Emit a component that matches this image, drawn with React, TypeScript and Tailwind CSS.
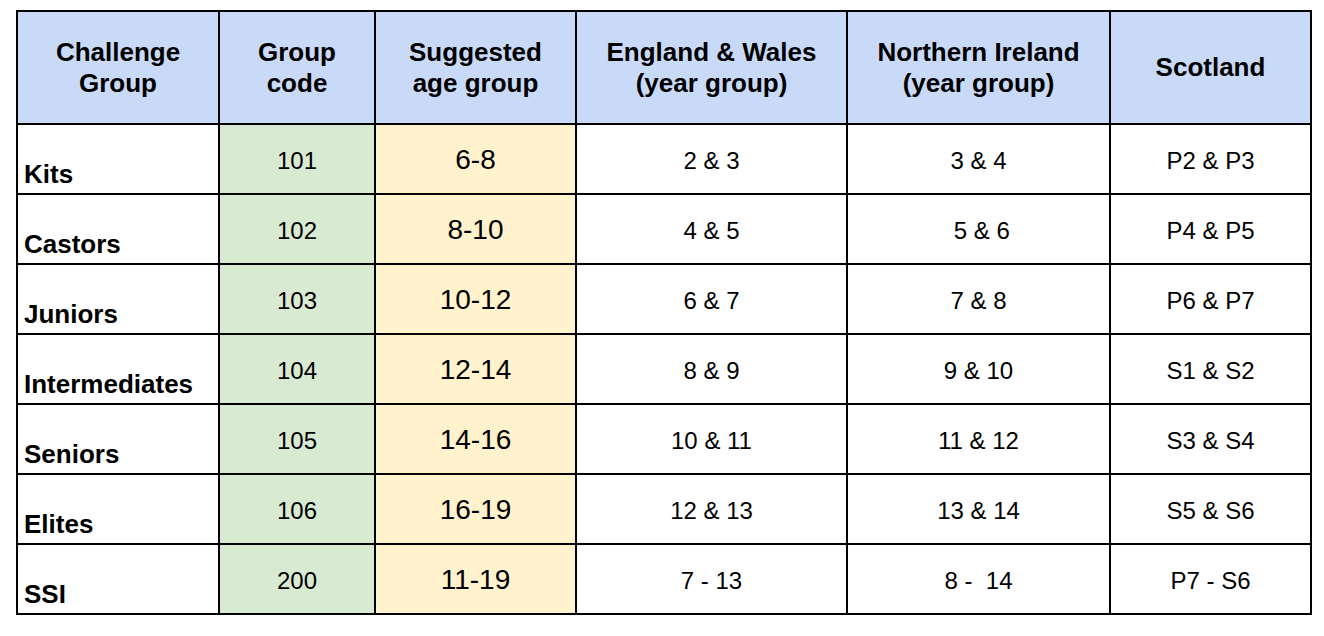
const rows = [
  { name: "Kits", code: "101", age: "6-8", ew: "2 & 3", ni: "3 & 4", sc: "P2 & P3" },
  { name: "Castors", code: "102", age: "8-10", ew: "4 & 5", ni: " 5 & 6", sc: "P4 & P5" },
  { name: "Juniors", code: "103", age: "10-12", ew: "6 & 7", ni: "7 & 8", sc: "P6 & P7" },
  { name: "Intermediates", code: "104", age: "12-14", ew: "8 & 9", ni: "9 & 10", sc: "S1 & S2" },
  { name: "Seniors", code: "105", age: "14-16", ew: "10 & 11", ni: "11 & 12", sc: "S3 & S4" },
  { name: "Elites", code: "106", age: "16-19", ew: "12 & 13", ni: "13 & 14", sc: "S5 & S6" },
  { name: "SSI", code: "200", age: "11-19", ew: "7 - 13", ni: "8 -  14", sc: "P7 - S6" },
];

const headers = [
  ["Challenge", "Group"],
  ["Group", "code"],
  ["Suggested", "age group"],
  ["England & Wales", "(year group)"],
  ["Northern Ireland", "(year group)"],
  ["Scotland"],
];

const App = () => {
  return (
    <div className="min-h-screen bg-white pt-[10px] pl-[16px] text-black font-['Liberation_Sans',Arial,sans-serif]">
      <table className="table-fixed border-collapse">
        <colgroup>
          <col className="w-[202px]" />
          <col className="w-[156px]" />
          <col className="w-[201px]" />
          <col className="w-[271px]" />
          <col className="w-[263px]" />
          <col className="w-[201px]" />
        </colgroup>
        <thead>
          <tr className="h-[113px]">
            {headers.map((h, i) => (
              <th
                key={i}
                className="border-2 border-black bg-[#c9daf8] text-center align-middle text-[26px] font-bold leading-[31px] p-0"
              >
                {h.map((line, j) => (
                  <div key={j}>{line}</div>
                ))}
              </th>
            ))}
          </tr>
        </thead>
        <tbody>
          {rows.map((r) => (
            <tr key={r.code} className="h-[70px]">
              <td className="border-2 border-black align-bottom text-left text-[26px] font-bold leading-[30px] pl-[6px] pb-[4px]">
                {r.name}
              </td>
              <td className="border-2 border-black bg-[#d9ead3] text-center align-middle text-[24px] pt-[3px]">
                {r.code}
              </td>
              <td className="border-2 border-black bg-[#fff2cc] text-center align-middle text-[28px] pt-[2px]">
                {r.age}
              </td>
              <td className="border-2 border-black text-center align-middle text-[24px] whitespace-pre pt-[3px]">
                {r.ew}
              </td>
              <td className="border-2 border-black text-center align-middle text-[24px] whitespace-pre pt-[3px]">
                {r.ni}
              </td>
              <td className="border-2 border-black text-center align-middle text-[24px] whitespace-pre pt-[3px]">
                {r.sc}
              </td>
            </tr>
          ))}
        </tbody>
      </table>
    </div>
  );
};

export default App;
